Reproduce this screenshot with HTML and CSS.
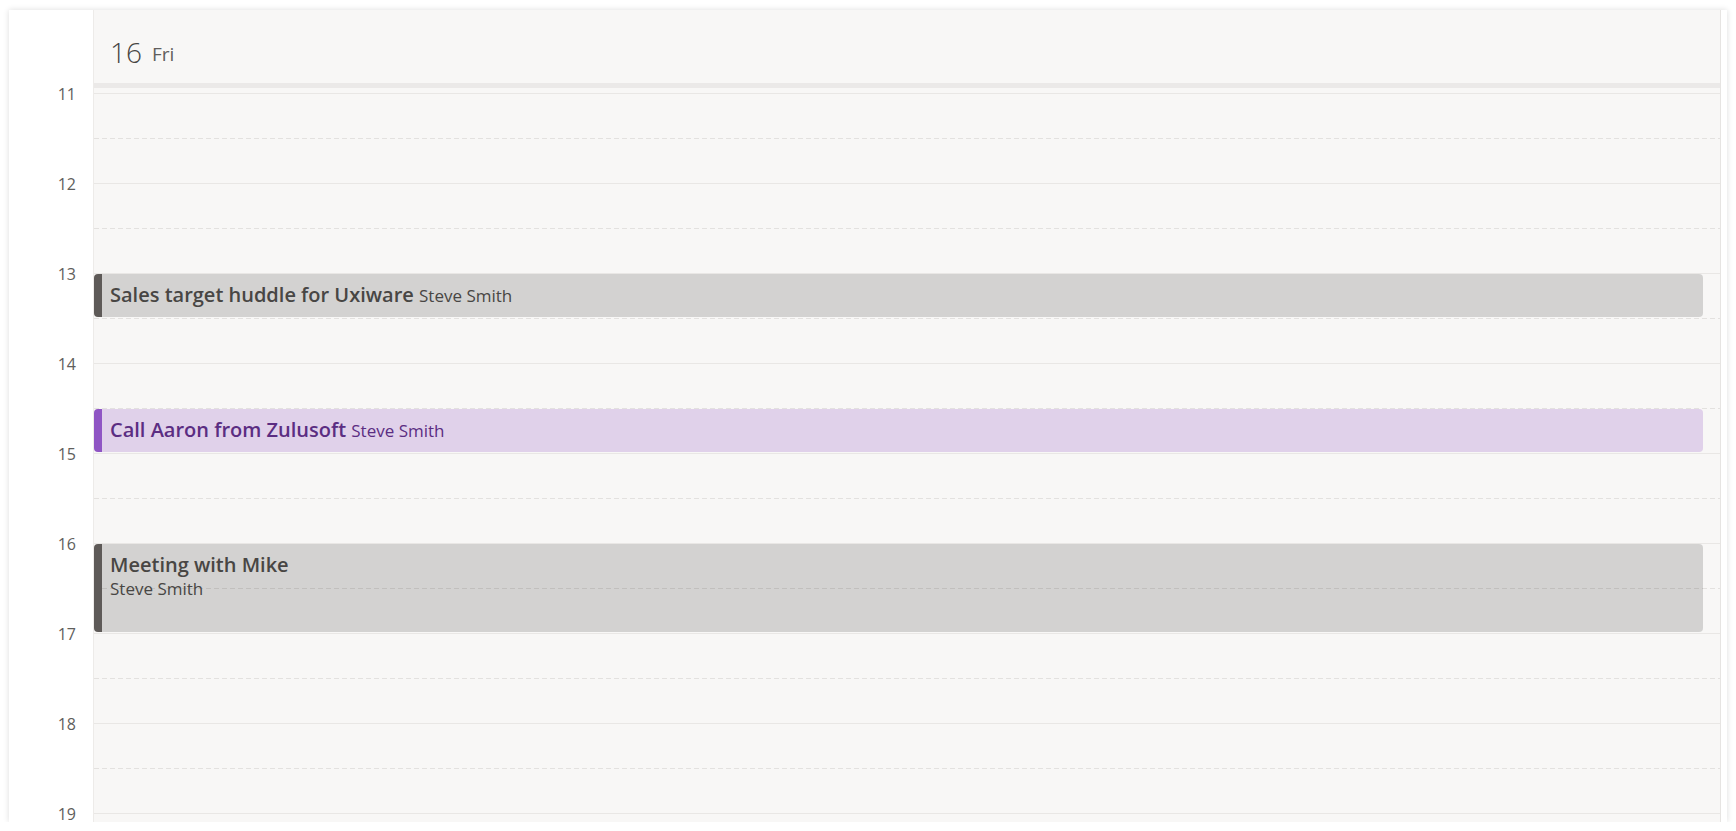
FILE: index.html
```html
<!DOCTYPE html>
<html lang="en">
<head>
    <meta charset="UTF-8">
    <meta name="viewport" content="width=device-width, initial-scale=1.0">
    <title>Calendar - Day</title>
    <link rel="stylesheet" href="styles.css">
</head>
<body>
    <div class="calendar">
        <!-- Hour labels -->
        <div class="gutter">
            <div class="hour-label">11</div>
            <div class="hour-label">12</div>
            <div class="hour-label">13</div>
            <div class="hour-label">14</div>
            <div class="hour-label">15</div>
            <div class="hour-label">16</div>
            <div class="hour-label">17</div>
            <div class="hour-label">18</div>
            <div class="hour-label">19</div>
        </div>

        <!-- Day column -->
        <div class="day">
            <div class="day-head">
                <span class="day-num">16</span>
                <span class="day-name">Fri</span>
            </div>
            <div class="day-body">
                <div class="grid">
                    <div class="slot"></div>
                    <div class="slot"></div>
                    <div class="slot"></div>
                    <div class="slot"></div>
                    <div class="slot"></div>
                    <div class="slot"></div>
                    <div class="slot"></div>
                    <div class="slot"></div>
                    <div class="slot"></div>

                    <!-- 13:00 - 13:30 -->
                    <div class="event event-gray" style="top: 181px; height: 43px;">
                        <span class="event-title">Sales target huddle for Uxiware</span>
                        <span class="event-owner">Steve Smith</span>
                    </div>

                    <!-- 14:30 - 15:00 -->
                    <div class="event event-purple" style="top: 316px; height: 43px;">
                        <span class="event-title">Call Aaron from Zulusoft</span>
                        <span class="event-owner">Steve Smith</span>
                    </div>

                    <!-- 16:00 - 17:00 -->
                    <div class="event event-gray event-tall" style="top: 451px; height: 88px;">
                        <span class="event-title">Meeting with Mike</span>
                        <span class="event-owner">Steve Smith</span>
                    </div>
                </div>
            </div>
        </div>

        <div class="scroll-strip"></div>
    </div>
</body>
</html>
```

FILE: styles.css
```css
/* Global */
body {
    margin: 0;
    padding: 0;
    background-color: #fff;
    font-family: 'Open Sans', 'Noto Sans', sans-serif;
    color: #484644;
}

/* Card */
.calendar {
    display: flex;
    margin: 10px 9px 0 9px;
    height: 812px;
    overflow: hidden;
    background-color: #fff;
    box-shadow: 0 0 6px rgba(0, 0, 0, 0.14);
}

/* Hour labels */
.gutter {
    width: 84px;
    flex-shrink: 0;
    padding-top: 74px;
    background-color: #fff;
}

.hour-label {
    height: 90px;
    line-height: 20px;
    font-size: 16px;
    color: #605e5c;
    text-align: right;
    padding-right: 17px;
}

/* Day column */
.day {
    flex: 1;
    background-color: #f8f7f6;
    border-left: 1px solid #edebe9;
    border-right: 1px solid #e6e4e2;
}

.day-head {
    box-sizing: border-box;
    height: 78px;
    padding: 23px 16px 0 16px;
    border-bottom: 5px solid #ebe9e8;
    display: flex;
    align-items: flex-start;
}

.day-num {
    font-size: 28px;
    font-weight: 300;
    line-height: 38px;
    color: #484644;
    margin-right: 10px;
}

.day-name {
    font-size: 19px;
    line-height: 26px;
    margin-top: 8px;
    color: #605e5c;
}

.day-body {
    padding-top: 5px;
}

.grid {
    position: relative;
}

.slot {
    box-sizing: border-box;
    height: 90px;
    border-top: 1px solid #e9e7e5;
    position: relative;
}

.slot::after {
    content: "";
    position: absolute;
    left: 0;
    right: 0;
    top: 44px;
    height: 1px;
    background-image: repeating-linear-gradient(to right, #e3e1df 0 5px, transparent 5px 8px);
}

/* Events */
.event {
    position: absolute;
    left: 0;
    right: 17px;
    box-sizing: border-box;
    padding: 7px 8px 0 8px;
    border-left: 8px solid;
    border-radius: 4px;
    white-space: nowrap;
    overflow: hidden;
}

.event-title {
    font-size: 20px;
    font-weight: 600;
    line-height: 27px;
    margin-right: 1px;
}

.event-owner {
    font-size: 17px;
    line-height: 22px;
}

.event-tall .event-title,
.event-tall .event-owner {
    display: block;
}

.event-gray {
    background-color: rgba(0, 0, 0, 0.15);
    border-left-color: #5e5a58;
    color: #484644;
}

.event-purple {
    background-color: rgba(146, 84, 196, 0.23);
    border-left-color: #8f55c4;
    color: #5b2d82;
}

.scroll-strip {
    width: 6px;
    flex-shrink: 0;
    background-color: #fff;
}
```
